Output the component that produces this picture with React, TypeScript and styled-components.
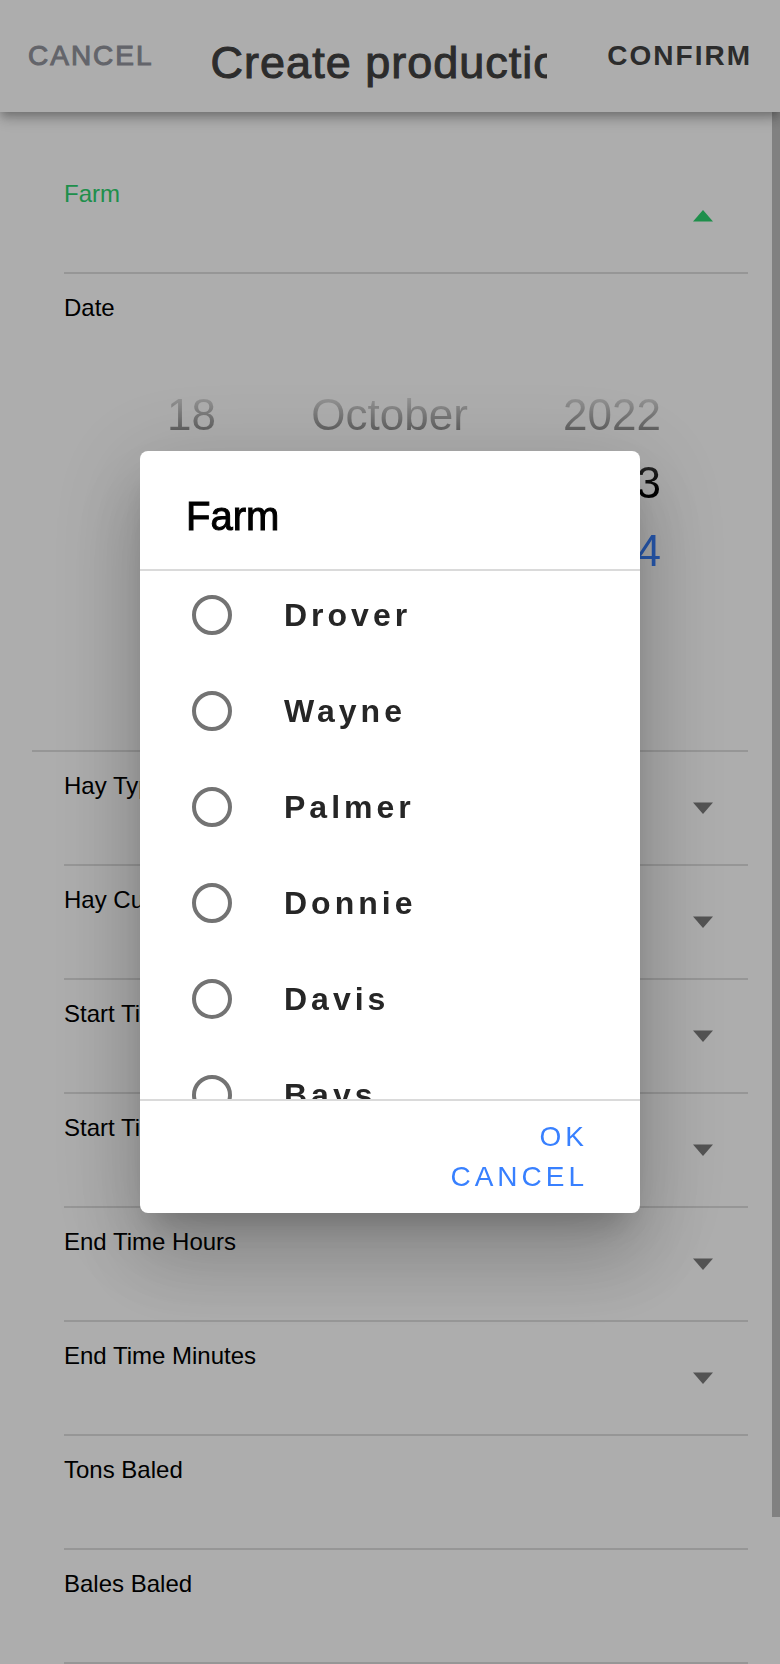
import React, { useId, useState } from 'react';
import styled, { createGlobalStyle } from 'styled-components';

const GlobalStyle = createGlobalStyle`
  *, *::before, *::after { box-sizing: border-box; }
  body {
    margin: 0;
    background: #ffffff;
    color: #000000;
    font-family: "Helvetica Neue", "Liberation Sans", Arial, sans-serif;
  }
  button, input, select {
    margin: 0;
    padding: 0;
    border: 0;
    background: none;
    color: inherit;
    font: inherit;
  }
`;

const Page = styled.div`
  position: relative;
  min-height: 100vh;
  overflow: hidden;
`;

const Toolbar = styled.header`
  position: relative;
  z-index: 1;
  display: flex;
  align-items: center;
  height: 112px;
  padding: 0 28px;
  background: #ffffff;
  box-shadow:
    0 4px 8px -2px rgba(0, 0, 0, 0.2),
    0 8px 10px 0 rgba(0, 0, 0, 0.14),
    0 2px 20px 0 rgba(0, 0, 0, 0.12);
`;

const ToolbarButton = styled.button<{ $strong?: boolean }>`
  flex: none;
  color: ${(p) => (p.$strong ? '#424242' : '#92949c')};
  font-size: 28px;
  line-height: 32px;
  font-weight: ${(p) => (p.$strong ? 700 : 400)};
  -webkit-text-stroke: ${(p) => (p.$strong ? '0' : '1px #92949c')};
  letter-spacing: 2px;
  text-transform: uppercase;
`;

const ToolbarTitle = styled.h1`
  flex: 1;
  min-width: 0;
  margin: 0 60px 0 57px;
  padding-top: 14px;
  overflow: hidden;
  white-space: nowrap;
  color: #424242;
  font-size: 45px;
  line-height: 56px;
  font-weight: 400;
  letter-spacing: 1px;
  -webkit-text-stroke: 1px #424242;
`;

const Form = styled.form`
  padding: 48px 32px 0;
`;

const Field = styled.div`
  display: grid;
  grid-template-columns: 1fr auto;
  grid-template-rows: 48px 64px;
  margin-left: 32px;
  border-bottom: 2px solid #dedede;
`;

const FieldLabel = styled.label<{ $active?: boolean }>`
  padding-top: 20px;
  color: ${(p) => (p.$active ? '#2dd36f' : '#000000')};
  font-size: 24px;
  line-height: 28px;
`;

const FieldSelect = styled.select`
  grid-column: 1;
  width: 100%;
  appearance: none;
  outline: none;
  font-size: 32px;
`;

const FieldInput = styled.input`
  grid-column: 1 / -1;
  width: 100%;
  outline: none;
  font-size: 32px;
`;

const Arrow = styled.svg<{ $active?: boolean }>`
  grid-column: 2;
  grid-row: 1 / -1;
  align-self: center;
  margin-right: 35px;
  fill: ${(p) => (p.$active ? '#2dd36f' : '#7b7b7b')};
  transform: ${(p) => (p.$active ? 'rotate(180deg)' : 'none')};
`;

const DateField = styled.div`
  padding-left: 32px;
  border-bottom: 2px solid #dedede;
`;

const DateLabel = styled.div`
  height: 76px;
  padding-top: 20px;
  font-size: 24px;
  line-height: 28px;
`;

const Picker = styled.div`
  display: flex;
  justify-content: space-between;
  height: 400px;
  padding: 31px 87px 0 103px;
  mask-image: linear-gradient(to bottom, transparent 32px, #000000 140px);
`;

const Wheel = styled.ul`
  margin: 0;
  padding: 0;
  list-style: none;
  text-align: center;
`;

const WheelOption = styled.li<{ $selected: boolean }>`
  color: ${(p) => (p.$selected ? '#3880ff' : '#000000')};
  font-size: 44px;
  line-height: 68px;
`;

const ScrollThumb = styled.div`
  position: absolute;
  top: 112px;
  right: 0;
  bottom: 147px;
  width: 8px;
  background: #bfbfbf;
`;

const Overlay = styled.div`
  position: fixed;
  inset: 0;
  z-index: 2;
  display: flex;
  align-items: center;
  justify-content: center;
  padding: 32px;
  background: rgba(0, 0, 0, 0.32);
`;

const Dialog = styled.section`
  display: flex;
  flex-direction: column;
  width: 100%;
  max-width: 500px;
  max-height: 100%;
  border-radius: 8px;
  background: #ffffff;
  overflow: hidden;
  box-shadow:
    0 22px 30px -14px rgba(0, 0, 0, 0.2),
    0 48px 76px 6px rgba(0, 0, 0, 0.14),
    0 18px 92px 16px rgba(0, 0, 0, 0.12);
`;

const DialogTitle = styled.h2`
  margin: 0;
  padding: 41px 46px 29px;
  font-size: 40px;
  line-height: 48px;
  font-weight: 400;
  -webkit-text-stroke: 1px #000000;
`;

const OptionList = styled.div`
  max-height: 532px;
  overflow-y: auto;
  scrollbar-width: none;
  border-top: 2px solid #dadada;
  border-bottom: 2px solid #dadada;
`;

const Option = styled.label`
  display: flex;
  align-items: center;
  gap: 52px;
  padding: 24px 52px 32px;
  color: #262626;
  font-size: 32px;
  line-height: 40px;
  font-weight: 700;
  letter-spacing: 4px;
`;

const Radio = styled.input`
  flex: none;
  width: 40px;
  height: 40px;
  appearance: none;
  border: 4px solid #737373;
  border-radius: 50%;

  &:checked {
    border-color: #3880ff;
    background: radial-gradient(#3880ff 10px, transparent 11px);
  }
`;

const Actions = styled.footer`
  display: flex;
  flex-direction: column;
  align-items: flex-end;
  padding: 16px 52px;
`;

const ActionButton = styled.button`
  color: #3880ff;
  font-size: 28px;
  line-height: 40px;
  letter-spacing: 4px;
  text-transform: uppercase;
`;

const farms = ['Drover', 'Wayne', 'Palmer', 'Donnie', 'Davis', 'Bays'];

const wheels = [
  { name: 'Day', values: ['18', '19', '20'] },
  { name: 'Month', values: ['October', 'November', 'December'] },
  { name: 'Year', values: ['2022', '2023', '2024'] },
];

const selectFields = [
  'Hay Type',
  'Hay Cutting',
  'Start Time Hours',
  'Start Time Minutes',
  'End Time Hours',
  'End Time Minutes',
];

const textFields = ['Tons Baled', 'Bales Baled'];

function SelectField({ label, active }: { label: string; active?: boolean }) {
  const id = useId();
  return (
    <Field>
      <FieldLabel htmlFor={id} $active={active}>{label}</FieldLabel>
      <FieldSelect id={id} />
      <Arrow $active={active} width="20" height="12" viewBox="0 0 20 12" aria-hidden="true">
        <path d="M0 0.5h20L10 12z" />
      </Arrow>
    </Field>
  );
}

function TextField({ label }: { label: string }) {
  const id = useId();
  return (
    <Field>
      <FieldLabel htmlFor={id}>{label}</FieldLabel>
      <FieldInput id={id} type="text" inputMode="numeric" />
    </Field>
  );
}

function DatePicker() {
  return (
    <DateField role="group" aria-labelledby="date-label">
      <DateLabel id="date-label">Date</DateLabel>
      <Picker>
        {wheels.map((wheel) => (
          <Wheel key={wheel.name} role="listbox" aria-label={wheel.name}>
            {wheel.values.map((value, i) => (
              <WheelOption key={value} role="option" aria-selected={i === 2} $selected={i === 2}>
                {value}
              </WheelOption>
            ))}
          </Wheel>
        ))}
      </Picker>
    </DateField>
  );
}

function FarmDialog({ onClose }: { onClose: () => void }) {
  const [farm, setFarm] = useState('');
  return (
    <Overlay>
      <Dialog role="dialog" aria-modal="true" aria-labelledby="farm-title">
        <DialogTitle id="farm-title">Farm</DialogTitle>
        <OptionList role="radiogroup" aria-labelledby="farm-title">
          {farms.map((name) => (
            <Option key={name}>
              <Radio
                type="radio"
                name="farm"
                value={name}
                checked={farm === name}
                onChange={() => setFarm(name)}
              />
              {name}
            </Option>
          ))}
        </OptionList>
        <Actions>
          <ActionButton type="button" onClick={onClose}>OK</ActionButton>
          <ActionButton type="button" onClick={onClose}>Cancel</ActionButton>
        </Actions>
      </Dialog>
    </Overlay>
  );
}

export default function App() {
  const [open, setOpen] = useState(true);
  return (
    <>
      <GlobalStyle />
      <Page>
        <Toolbar>
          <ToolbarButton type="button">Cancel</ToolbarButton>
          <ToolbarTitle>Create production</ToolbarTitle>
          <ToolbarButton type="button" $strong>Confirm</ToolbarButton>
        </Toolbar>
        <Form>
          <SelectField label="Farm" active={open} />
          <DatePicker />
          {selectFields.map((label) => (
            <SelectField key={label} label={label} />
          ))}
          {textFields.map((label) => (
            <TextField key={label} label={label} />
          ))}
        </Form>
        <ScrollThumb aria-hidden="true" />
      </Page>
      {open && <FarmDialog onClose={() => setOpen(false)} />}
    </>
  );
}
